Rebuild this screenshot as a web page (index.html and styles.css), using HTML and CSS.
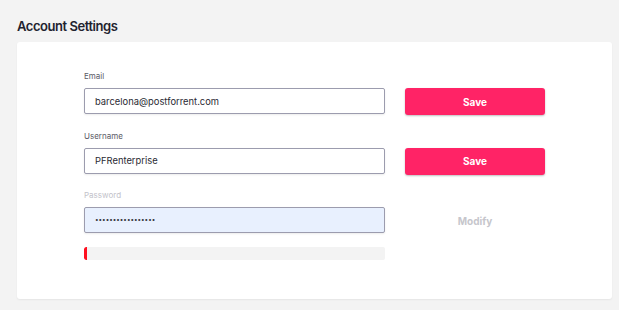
FILE: index.html
```html
<!DOCTYPE html>
<html>
<head>
<meta charset="utf-8">
<link rel="stylesheet" href="styles.css">
</head>
<body>
<h1 class="title">Account Settings</h1>
<section class="card">
  <form class="form">
    <div class="field">
      <label class="label">Email</label>
      <div class="row">
        <input class="input" type="text" value="barcelona@postforrent.com">
        <button class="btn" type="button">Save</button>
      </div>
    </div>
    <div class="field">
      <label class="label">Username</label>
      <div class="row">
        <input class="input" type="text" value="PFRenterprise">
        <button class="btn" type="button">Save</button>
      </div>
    </div>
    <div class="field">
      <label class="label label-disabled">Password</label>
      <div class="row">
        <input class="input input-filled" type="password" value="aaaaaaaaaaaaaaaaa">
        <button class="btn btn-ghost" type="button">Modify</button>
      </div>
      <div class="strength"><div class="strength-fill" style="width:3px"></div></div>
    </div>
  </form>
</section>
</body>
</html>
```

FILE: styles.css
```css
* { box-sizing: border-box; }
html, body { margin: 0; padding: 0; }
body {
  background: #f3f3f3;
  font-family: Inter, "Noto Sans", sans-serif;
  padding: 18px 7px 0 17px;
  height: 310px;
  overflow: hidden;
}
.title {
  margin: 0 0 8px;
  font-size: 13px;
  line-height: 16px;
  font-weight: 600;
  letter-spacing: -0.45px;
  color: #22222e;
}
.card {
  background: #fff;
  border-radius: 3px;
  width: 595px;
  height: 257px;
  box-shadow: 0 1px 2px rgba(0,0,0,0.06);
  padding-top: 29px;
  display: flex;
  justify-content: center;
}
.form {
  width: 461px;
  display: flex;
  flex-direction: column;
  gap: 15.5px;
}
.field { display: flex; flex-direction: column; }
.label {
  font-size: 8px;
  line-height: 10px;
  color: #5b5b66;
  margin-bottom: 7px;
}
.label-disabled { color: #c2c2ca; }
.row {
  display: grid;
  grid-template-columns: 301px 140px;
  column-gap: 20px;
  align-items: start;
}
.input {
  height: 26px;
  border: 1px solid #9c9cae;
  border-radius: 2px;
  padding: 0 10px;
  font-family: Inter, "Noto Sans", sans-serif;
  font-size: 9.4px;
  color: #2a2a33;
  background: #fff;
  box-shadow: 0 1px 2px rgba(0,0,0,0.08);
  outline: none;
}
.input-filled {
  background: #e8f0fe;
  font-size: 6.3px;
  color: #3a3a44;
}
.btn {
  height: 27px;
  border: 0;
  border-radius: 3px;
  background: #ff2366;
  color: #fff;
  font-family: Inter, "Noto Sans", sans-serif;
  font-size: 10px;
  font-weight: 700;
  box-shadow: 0 1px 2px rgba(0,0,0,0.25);
  cursor: pointer;
}
.btn-ghost {
  background: transparent;
  color: #c6c6cc;
  box-shadow: none;
}
.strength {
  margin-top: 13px;
  width: 301px;
  height: 13px;
  background: #f3f3f3;
  border-radius: 2px;
  overflow: hidden;
}
.strength-fill {
  height: 100%;
  background: #ff1020;
  border-radius: 2px 0 0 2px;
}
```
